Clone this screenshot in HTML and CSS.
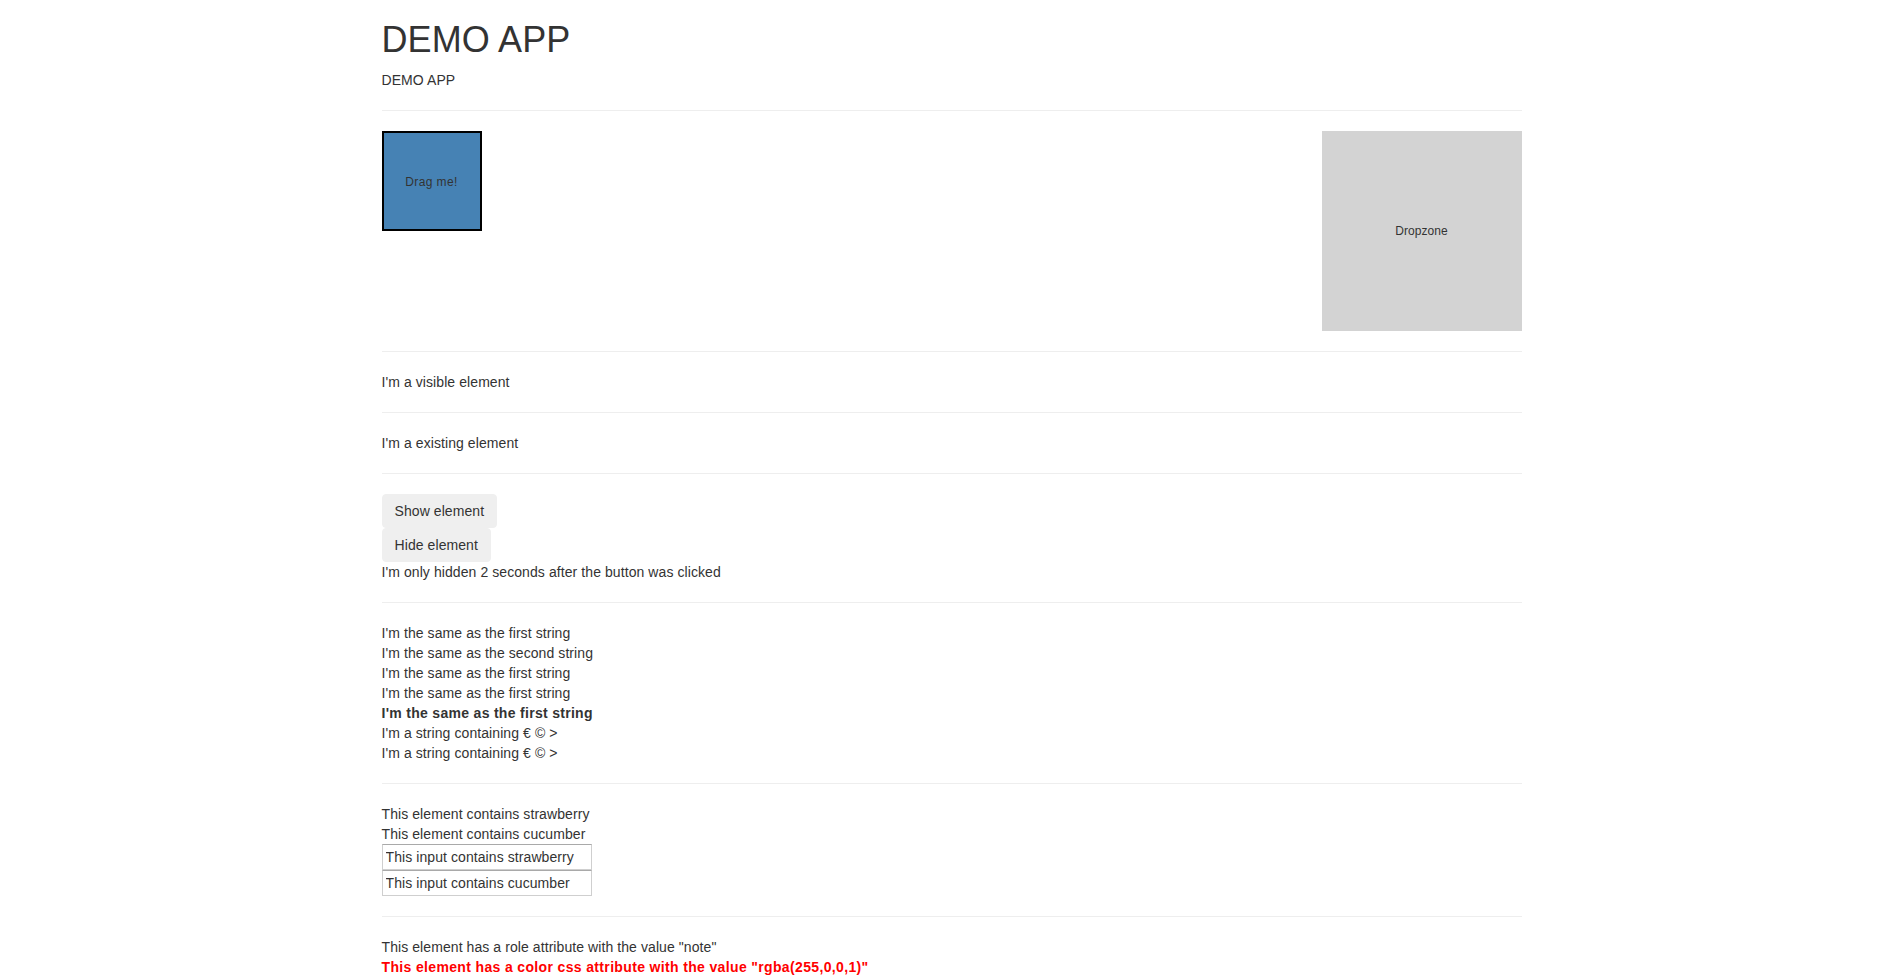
FILE: index.html
```html
<!DOCTYPE html>
<html>
<head>
<meta charset="utf-8">
<title>DEMO APP</title>
<link rel="stylesheet" href="styles.css">
</head>
<body>
<div class="container">
  <h1 class="title">DEMO APP</h1>
  <div class="subtitle">DEMO APP</div>
  <hr>
  <div class="dnd">
    <div class="draggable">Drag me!</div>
    <div class="dropzone">Dropzone</div>
  </div>
  <hr>
  <div>I'm a visible element</div>
  <hr>
  <div>I'm a existing element</div>
  <hr>
  <div class="btns">
    <button class="btn">Show element</button>
    <button class="btn">Hide element</button>
  </div>
  <div>I'm only hidden 2 seconds after the button was clicked</div>
  <hr>
  <div>I'm the same as the first string</div>
  <div>I'm the same as the second string</div>
  <div>I'm the same as the first string</div>
  <div>I'm the same as the first string</div>
  <div class="bold">I'm the same as the first string</div>
  <div>I'm a string containing € © &gt;</div>
  <div>I'm a string containing € © &gt;</div>
  <hr>
  <div>This element contains strawberry</div>
  <div>This element contains cucumber</div>
  <input class="field" type="text" value="This input contains strawberry">
  <input class="field" type="text" value="This input contains cucumber">
  <hr>
  <div role="note">This element has a role attribute with the value "note"</div>
  <div class="red">This element has a color css attribute with the value "rgba(255,0,0,1)"</div>
</div>
</body>
</html>
```

FILE: styles.css
```css
* { box-sizing: border-box; }
html, body { margin: 0; padding: 0; }
body {
  font-family: "Liberation Sans", Arial, Helvetica, sans-serif;
  font-size: 14px;
  line-height: 20px;
  color: #333;
  background: #fff;
  letter-spacing: 0.08px;
}
.container {
  width: 1170px;
  padding: 0 15px;
  margin: 0 auto;
}
.title {
  font-size: 36px;
  font-weight: 500;
  line-height: 39.6px;
  margin: 20px 0 10px;
  letter-spacing: 0.1px;
}
hr {
  margin: 20px 0;
  border: 0;
  border-top: 1px solid #eee;
  height: 0;
}
.dnd {
  display: flex;
  justify-content: space-between;
  align-items: flex-start;
}
.draggable {
  width: 100px;
  height: 100px;
  background: #4682b4;
  border: 2px solid #000;
  display: flex;
  align-items: center;
  justify-content: center;
  font-size: 12px;
  padding-top: 3px;
  letter-spacing: 0.4px;
}
.dropzone {
  width: 200px;
  height: 200px;
  background: #d3d3d3;
  display: flex;
  align-items: center;
  justify-content: center;
  font-size: 12px;
}
.btns {
  display: flex;
  flex-direction: column;
  align-items: flex-start;
}
.btn {
  font-family: inherit;
  font-size: 14px;
  line-height: 20px;
  letter-spacing: 0.08px;
  color: #333;
  padding: 6px 12px;
  background: #efefef;
  border: 1px solid #efefef;
  border-radius: 4px;
  margin: 0;
}
.bold {
  font-weight: bold;
  letter-spacing: 0.3px;
}
.field {
  display: block;
  width: 210px;
  height: 26px;
  margin: 0;
  font-family: inherit;
  font-size: 14px;
  line-height: 20px;
  letter-spacing: 0.08px;
  color: #333;
  padding: 2px 3px;
  border: 1px solid #cfcfcf;
  border-top-color: #a9a9a9;
  border-radius: 0;
  background: #fff;
  outline: none;
}
.red {
  color: rgba(255, 0, 0, 1);
  font-weight: bold;
  letter-spacing: 0.35px;
}
```
